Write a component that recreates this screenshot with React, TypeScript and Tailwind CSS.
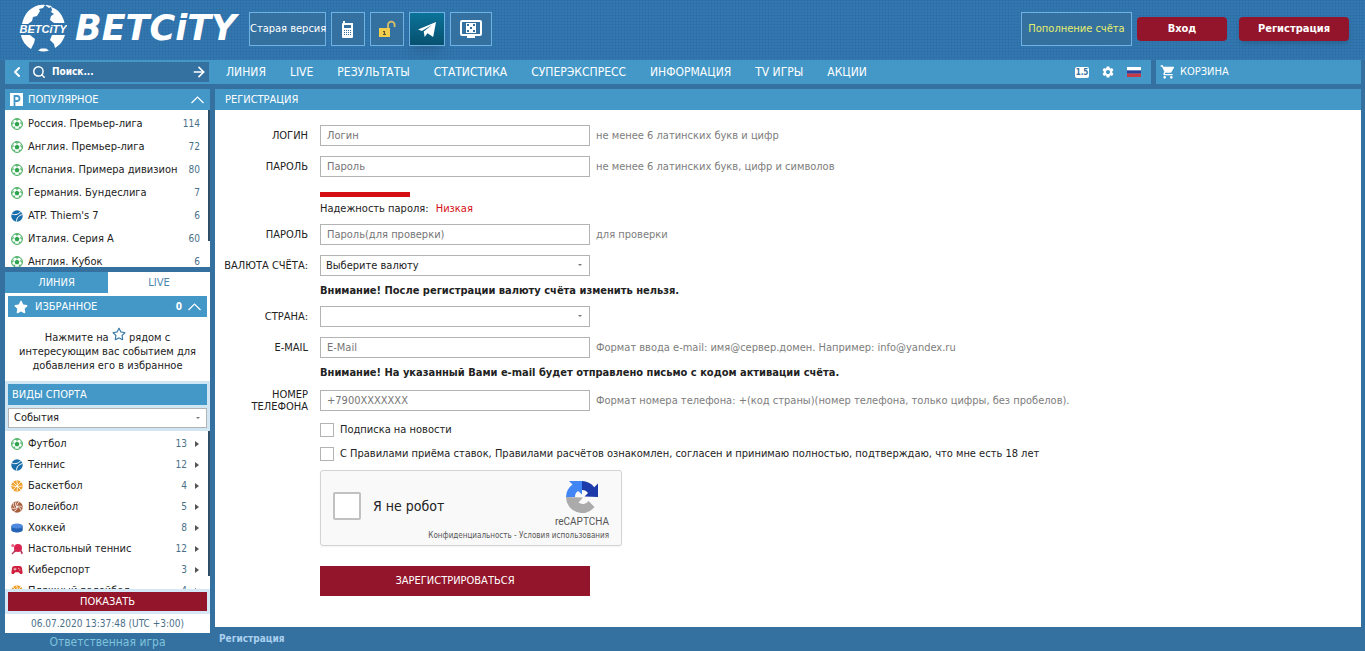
import React from 'react';
import { FaStar, FaRegStar } from 'react-icons/fa';
import { FiArrowRight, FiChevronLeft, FiSearch } from 'react-icons/fi';
import { MdSettings, MdShoppingCart, MdSportsEsports } from 'react-icons/md';

const SoccerIcon = () => (
  <svg viewBox="0 0 24 24" className="size-3 shrink-0">
    <circle cx="12" cy="12" r="10.8" fill="#fff" stroke="#35a853" strokeWidth="2" />
    <path d="M12 7l5 3.600-2 5.800H9l-2-5.800z" fill="#2ea44f" />
    <path d="M7 2.500L12 5.500l5-3zM1.500 14l4-3.500-1-4zM22.500 14l-4-3.500 1-4zM5 20l4-.5-3.500-3.500zM19 20l-4-.5 3.500-3.500z" fill="#35a853" />
  </svg>
);

const TennisIcon = () => (
  <svg viewBox="0 0 24 24" className="size-3 shrink-0">
    <circle cx="12" cy="12" r="11.5" fill="#1a6fab" />
    <path d="M0 7c6 4 14 3 20-4M11 23c0-7 4-12 12-14" fill="none" stroke="#fff" strokeWidth="2" />
  </svg>
);

const BasketballIcon = () => (
  <svg viewBox="0 0 24 24" className="size-3 shrink-0">
    <circle cx="12" cy="12" r="11.5" fill="#f0a22e" />
    <path d="M4 4l16 16M20 4L4 20M11 1c3 5 2 17 1 22M1 11c5 3 17 2 22 1" fill="none" stroke="#fff" strokeWidth="1.5" />
  </svg>
);

const VolleyballIcon = () => (
  <svg viewBox="0 0 24 24" className="size-3 shrink-0">
    <circle cx="12" cy="12" r="11.5" fill="#a9603f" />
    <path
      d="M12 12c-1-5 1-8 5-10M12 12c4-3 8-2 11 1M12 12c0 5-3 8-7 9M12 12C8 9 8 4 11 1M12 12c5 0 8 3 8 7M12 12c-3 4-7 4-10 2M8 13c-3-2-4-5-3-9"
      fill="none"
      stroke="#fff"
      strokeWidth="1.6"
    />
  </svg>
);

const PuckIcon = () => (
  <svg viewBox="0 0 24 24" className="size-3 shrink-0">
    <path d="M.5 8v8c0 6.500 23 6.500 23 0V8z" fill="#2463b5" />
    <ellipse cx="12" cy="8" rx="11.500" ry="5" fill="#4f8ade" />
  </svg>
);

const TableTennisIcon = () => (
  <svg viewBox="0 0 24 24" className="size-3 shrink-0">
    <circle cx="14" cy="10" r="8" fill="#dc2450" />
    <path d="M18 15l2-2 4 7-3 3z" fill="#b83a5a" />
    <path d="M7 13l4 4-4 2-4 4-2-2 4-4z" fill="#b83a5a" />
    <circle cx="3.500" cy="5" r="3" fill="#e8627f" />
  </svg>
);

const EsportsIcon = () => <MdSportsEsports className="-mx-px size-[14px] shrink-0 text-[#d01f3c]" />;

const GlobeLogo = () => (
  <svg viewBox="0 0 48 48" className="size-12 shrink-0">
    <g fill="#fff">
      <path d="M15 3c4-2 7-2.500 11-2l-2 3-4 1 1 2-3 5-4 1-1 4-4 3H3C5 11 9 6 15 3z" />
      <path d="M32 3c7 2 12 8 13.500 16H35l-4-3 1-4 3-2-3-2 1-2z" />
      <path d="M2 31h9l5 4-1 4-3 6C7 42 3 37 2 31z" />
      <path d="M33 31h13c-2 6-5 10-10 13l-1-4-4-4z" />
      <path d="M19 46.500l3-2h5l3 2c-4 1.300-7 1.300-11 0z" />
      <path d="M26 1c3 0 5 .5 7 1.500L30 4z" />
    </g>
    <text x="24" y="29" textAnchor="middle" fill="#fff" fontSize="11" fontWeight="bold" fontStyle="italic" fontFamily="Liberation Sans, sans-serif">
      BETCiTY
    </text>
  </svg>
);

const PhoneIcon = () => (
  <svg viewBox="0 0 12 17" className="h-[17px] w-3">
    <path d="M1 0h2v2h8v14a1 1 0 0 1-1 1H1a1 1 0 0 1-1-1V3a1 1 0 0 1 1-1z" fill="#fff" />
    <path d="M2 4h7v3H2z" fill="#3571a0" />
    <path d="M2 9.500h8M2 11.500h8M2 13.500h8" stroke="#3571a0" strokeDasharray="1 1" />
  </svg>
);

const LockIcon = () => (
  <svg viewBox="0 0 18 18" className="size-[18px]">
    <path d="M10 9V5a3.300 3.300 0 0 1 6.600 0v2" fill="none" stroke="#d9c069" strokeWidth="1.800" />
    <rect x="1" y="8" width="11" height="9" fill="#f3cd4c" />
    <path d="M5 11h2v3h1v1H5v-1h.8v-2H5z" fill="#5a5230" />
  </svg>
);

const TelegramIcon = () => (
  <svg viewBox="0 0 20 18" className="h-[17px] w-[19px]">
    <path d="M0 9L19 1 16 17l-6-4-3 4-1-6L15 4 4 10.500z" fill="#fff" />
  </svg>
);

const ScreenIcon = () => (
  <svg viewBox="0 0 22 18" className="h-[18px] w-[22px]">
    <rect x="1" y="1" width="20" height="14" rx="1" fill="none" stroke="#fff" strokeWidth="2" />
    <path d="M7 15h8v3H7z" fill="#fff" />
    <rect x="6" y="3" width="10" height="10" fill="#fff" />
    <path d="M7 4h2v2H7zM13 4h2v2h-2zM7 10h2v2H7zM13 10h2v2h-2zM10 7h2v2h-2z" fill="#3571a0" />
  </svg>
);

const FlagIcon = () => (
  <svg viewBox="0 0 14 10" className="h-[10px] w-[14px]">
    <path d="M0 0h14v3.500H0z" fill="#fff" />
    <path d="M0 3.500h14v3H0z" fill="#2a3f9a" />
    <path d="M0 6.500h14V10H0z" fill="#c43a46" />
  </svg>
);

const PopularIcon = () => (
  <svg viewBox="0 0 13 13" className="size-[13px]">
    <path d="M0 0h13v13H0z" fill="#fff" />
    <path d="M4.500 13V3h2.500a2.500 2.500 0 0 1 0 5H4.500" fill="none" stroke="#4398c8" strokeWidth="1.800" />
  </svg>
);

const CollapseIcon = () => (
  <svg viewBox="0 0 13 8" className="h-2 w-[13px]">
    <path d="M.5 7l6-6 6 6" fill="none" stroke="#fff" strokeWidth="1.200" />
  </svg>
);

const RecaptchaIcon = () => (
  <svg viewBox="0 0 64 64" className="size-8 shrink-0">
    <path d="M64 32V5l-7.500 7.500A32 32 0 0 0 32 0v18a14 14 0 0 1 12 6l-7 7z" fill="#1c3aa9" />
    <path d="M32 0H6l7 7A32 32 0 0 0 0 32h18a14 14 0 0 1 6-12l8 7z" fill="#4285f4" />
    <path d="M0 32a32 32 0 0 0 57 20L45 40a14 14 0 0 1-20 3l9-10z" fill="#ababab" />
  </svg>
);

const menu = ['ЛИНИЯ', 'LIVE', 'РЕЗУЛЬТАТЫ', 'СТАТИСТИКА', 'СУПЕРЭКСПРЕСС', 'ИНФОРМАЦИЯ', 'TV ИГРЫ', 'АКЦИИ'];

const popular = [
  { name: 'Россия. Премьер-лига', count: 114, Icon: SoccerIcon },
  { name: 'Англия. Премьер-лига', count: 72, Icon: SoccerIcon },
  { name: 'Испания. Примера дивизион', count: 80, Icon: SoccerIcon },
  { name: 'Германия. Бундеслига', count: 7, Icon: SoccerIcon },
  { name: "ATP. Thiem's 7", count: 6, Icon: TennisIcon },
  { name: 'Италия. Серия А', count: 60, Icon: SoccerIcon },
  { name: 'Англия. Кубок', count: 6, Icon: SoccerIcon },
];

const sports = [
  { name: 'Футбол', count: 13, Icon: SoccerIcon },
  { name: 'Теннис', count: 12, Icon: TennisIcon },
  { name: 'Баскетбол', count: 4, Icon: BasketballIcon },
  { name: 'Волейбол', count: 5, Icon: VolleyballIcon },
  { name: 'Хоккей', count: 8, Icon: PuckIcon },
  { name: 'Настольный теннис', count: 12, Icon: TableTennisIcon },
  { name: 'Киберспорт', count: 3, Icon: EsportsIcon },
  { name: 'Пляжный волейбол', count: 4, Icon: BasketballIcon },
];

const Header = () => (
  <header className="flex h-[60px] items-start bg-[#3277af] bg-[linear-gradient(90deg,rgba(20,60,120,0.08)_1px,transparent_1px),linear-gradient(rgba(20,60,120,0.08)_1px,transparent_1px)] bg-[size:3px_3px] pr-4 pl-[19px]">
    <a href="#" className="flex w-[230px] items-center gap-2 pt-1 text-white">
      <GlobeLogo />
      <span className="font-['DejaVu_Sans'] text-[35px] leading-[48px] font-bold italic">BETCiTY</span>
    </a>
    <div className="flex gap-[5px] pt-3">
      <button className="h-[34px] w-[77px] border border-[#6fb1e0] bg-[#3571a0] whitespace-nowrap text-white">Старая версия</button>
      <button aria-label="Мобильная версия" className="flex h-[34px] w-[34px] items-center justify-center border border-[#6fb1e0] bg-[#3571a0]">
        <PhoneIcon />
      </button>
      <button aria-label="Доступ" className="flex h-[34px] w-[34px] items-center justify-center border border-[#6fb1e0] bg-[#3571a0]">
        <LockIcon />
      </button>
      <button aria-label="Telegram" className="flex h-[34px] w-9 items-center justify-center border border-[#6fb1e0] bg-linear-to-b from-[#0b7399] to-[#07506f] shadow-lg">
        <TelegramIcon />
      </button>
      <button aria-label="ТВ" className="flex h-[34px] w-[42px] items-center justify-center border border-[#6fb1e0] bg-[#3571a0]">
        <ScreenIcon />
      </button>
    </div>
    <div className="ml-auto flex items-center pt-3">
      <a href="#" className="mr-[5px] flex h-[34px] w-[111px] items-center justify-center border border-[#6fb1e0] bg-[#3571a0] text-[#e6ef6c]">
        Пополнение счёта
      </a>
      <button className="mr-3 h-6 w-[90px] rounded bg-[#93152b] font-bold text-white">Вход</button>
      <button className="h-6 w-[110px] rounded bg-[#93152b] font-bold text-white shadow-md">Регистрация</button>
    </div>
  </header>
);

const TopBar = () => (
  <div className="mr-1 ml-[5px] flex h-6 gap-[5px] text-white">
    <div className="flex flex-1 items-center bg-[#4398c8]">
      <button aria-label="Свернуть" className="flex w-6 justify-center">
        <FiChevronLeft className="size-4" strokeWidth={3} />
      </button>
      <label className="flex h-5 w-[180px] items-center bg-[#3571a0] pr-[2px] pl-[3px]">
        <FiSearch className="size-[14px] shrink-0" strokeWidth={2.5} />
        <input aria-label="Поиск" placeholder="Поиск..." className="w-0 flex-1 bg-transparent pl-[6px] text-[10px] font-bold placeholder:text-white focus:outline-none" />
        <FiArrowRight className="size-4 shrink-0" strokeWidth={2.5} />
      </label>
      <nav className="ml-[17px] flex gap-6 text-[12px]">
        {menu.map((item) => (
          <a key={item} href="#">
            {item}
          </a>
        ))}
      </nav>
      <div className="ml-auto flex items-center gap-3 pr-[10px]">
        <button className="h-[11px] w-[14px] rounded-xs bg-white text-[8px] leading-[11px] font-bold text-[#3571a0]">1.5</button>
        <button aria-label="Настройки">
          <MdSettings className="size-[14px]" />
        </button>
        <button aria-label="Язык">
          <FlagIcon />
        </button>
      </div>
    </div>
    <a href="#" className="flex w-[205px] items-center gap-1 bg-[#4398c8] pl-1">
      <MdShoppingCart className="size-4" />
      КОРЗИНА
    </a>
  </div>
);

const Sidebar = () => (
  <aside className="flex w-[205px] shrink-0 flex-col">
    <h2 className="flex h-[21px] shrink-0 items-center bg-[#4398c8] pr-[6px] pl-[5px] text-white">
      <PopularIcon />
      <span className="mr-auto ml-[5px]">ПОПУЛЯРНОЕ</span>
      <CollapseIcon />
    </h2>
    <div className="relative h-[157px] shrink-0 overflow-hidden bg-white pt-[2px]">
      <ul>
        {popular.map(({ name, count, Icon }) => (
          <li key={name} className="flex h-[23px] items-center pr-[10px] pl-[6px]">
            <Icon />
            <a href="#" className="ml-[5px]">{name}</a>
            <span className="ml-auto text-[10px] text-[#4a7089]">{count}</span>
          </li>
        ))}
      </ul>
      <div className="absolute top-0 right-0 h-[131px] w-[2px] bg-[#2f4f68]" />
    </div>
    <div className="mt-[5px] flex h-[21px] shrink-0">
      <button className="w-[103px] bg-[#4398c8] text-white">ЛИНИЯ</button>
      <button className="flex-1 bg-white text-[#4a87b0]">LIVE</button>
    </div>
    <div className="h-[88px] shrink-0 bg-white px-[3px] pt-[3px]">
      <h2 className="flex h-[21px] items-center bg-[#4398c8] pr-[6px] pl-[6px] text-white">
        <FaStar className="size-[14px]" />
        <span className="ml-[7px]">ИЗБРАННОЕ</span>
        <span className="mr-[6px] ml-auto text-[10px] font-bold">0</span>
        <CollapseIcon />
      </h2>
      <p className="pt-[10px] text-center leading-[14px]">
        Нажмите на <FaRegStar className="inline size-[14px] align-[0px] text-[#3b7ba8]" /> рядом с<br />
        интересующим вас событием для
        <br />
        добавления его в избранное
      </p>
    </div>
    <div className="shrink-0 bg-[#d0e6f2] p-[3px]">
      <h2 className="flex h-[21px] items-center bg-[#4398c8] pl-1 text-white">ВИДЫ СПОРТА</h2>
      <div className="relative mt-[3px]">
        <select aria-label="Вид" className="block h-5 w-full appearance-none border border-[#b3b3b3] bg-white pl-[5px]">
          <option>События</option>
        </select>
        <div className="pointer-events-none absolute top-[9px] right-[7px] border-x-2 border-t-2 border-x-transparent border-t-[#777]" />
      </div>
    </div>
    <div className="relative min-h-0 flex-1 basis-0 overflow-hidden bg-white pt-[2px]">
      <ul>
        {sports.map(({ name, count, Icon }) => (
          <li key={name} className="flex h-[21px] items-center pr-[11px] pl-[6px]">
            <Icon />
            <a href="#" className="ml-[5px]">{name}</a>
            <span className="ml-auto text-[10px] text-[#4a7089]">{count}</span>
            <span className="ml-2 border-y-[3px] border-l-4 border-y-transparent border-l-[#555]" />
          </li>
        ))}
      </ul>
      <div className="absolute top-0 right-0 h-[145px] w-[2px] bg-[#2f4f68]" />
    </div>
    <div className="shrink-0 bg-[#d6e8f6] p-[3px]">
      <button className="block h-[19px] w-full bg-[#93152b] text-white">ПОКАЗАТЬ</button>
    </div>
    <div className="h-[19px] shrink-0 bg-white text-center text-[10px] leading-[19px] text-[#4a7089]">06.07.2020 13:37:48 (UTC +3:00)</div>
    <a href="#" className="h-[18px] shrink-0 text-center text-[12px] leading-[19px] text-[#7fc3dc]">Ответственная игра</a>
  </aside>
);

type FieldProps = {
  id: string;
  label: string;
  placeholder?: string;
  hint?: string;
  type?: string;
  options?: string[];
};

const Field = ({ id, label, placeholder, hint, type = 'text', options }: FieldProps) => (
  <div className="flex min-h-[31px] items-center">
    <label htmlFor={id} className="mr-3 w-[93px] shrink-0 text-right leading-3">
      {label}
    </label>
    {options ? (
      <div className="relative w-[270px]">
        <select id={id} className="block h-[21px] w-full appearance-none border border-[#b3b3b3] bg-white pl-[5px]">
          {options.map((option) => (
            <option key={option}>{option}</option>
          ))}
        </select>
        <div className="pointer-events-none absolute top-[9px] right-[8px] border-x-2 border-t-2 border-x-transparent border-t-[#777]" />
      </div>
    ) : (
      <input id={id} type={type} placeholder={placeholder} className="h-[21px] w-[270px] border border-[#b3b3b3] px-[6px] placeholder:text-[#757575]" />
    )}
    {hint && <span className="ml-[6px] text-[#7d7d7d]">{hint}</span>}
  </div>
);

const CheckRow = ({ id, label }: { id: string; label: string }) => (
  <div className="ml-[105px] flex h-6 items-center">
    <input id={id} type="checkbox" className="size-[14px] appearance-none border border-[#b3b3b3] bg-white checked:bg-[#4398c8]" />
    <label htmlFor={id} className="ml-[6px]">
      {label}
    </label>
  </div>
);

const RegistrationForm = () => (
  <form className="min-h-0 flex-1 bg-white pt-[10px] pb-[31px]">
    <Field id="login" label="ЛОГИН" placeholder="Логин" hint="не менее 6 латинских букв и цифр" />
    <Field id="password" type="password" label="ПАРОЛЬ" placeholder="Пароль" hint="не менее 6 латинских букв, цифр и символов" />
    <div className="ml-[105px] h-[37px] pt-[10px]">
      <div className="h-[5px] w-[90px] bg-[#d51015]" />
      <p className="leading-6">
        Надежность пароля: <span className="ml-1 text-[#d51015]">Низкая</span>
      </p>
    </div>
    <Field id="password2" type="password" label="ПАРОЛЬ" placeholder="Пароль(для проверки)" hint="для проверки" />
    <Field id="currency" label="ВАЛЮТА СЧЁТА:" options={['Выберите валюту']} />
    <p className="ml-[105px] leading-5 font-bold">Внимание! После регистрации валюту счёта изменить нельзя.</p>
    <Field id="country" label="СТРАНА:" options={['']} />
    <Field id="email" type="email" label="E-MAIL" placeholder="E-Mail" hint="Формат ввода e-mail: имя@сервер.домен. Например: info@yandex.ru" />
    <p className="ml-[105px] leading-5 font-bold">Внимание! На указанный Вами e-mail будет отправлено письмо с кодом активации счёта.</p>
    <div className="py-[2px]">
      <Field
        id="phone"
        type="tel"
        label="НОМЕР ТЕЛЕФОНА"
        placeholder="+7900XXXXXXX"
        hint="Формат номера телефона: +(код страны)(номер телефона, только цифры, без пробелов)."
      />
    </div>
    <CheckRow id="news" label="Подписка на новости" />
    <CheckRow id="rules" label="С Правилами приёма ставок, Правилами расчётов ознакомлен, согласен и принимаю полностью, подтверждаю, что мне есть 18 лет" />
    <div className="mt-1 ml-[105px] flex h-[76px] w-[302px] flex-col rounded-[3px] border border-[#d3d3d3] bg-[#f9f9f9] px-3 shadow-xs">
      <div className="flex h-[60px]">
        <div className="flex items-center pt-[10px]">
          <input id="robot" type="checkbox" className="size-7 appearance-none rounded-xs border-2 border-[#c1c1c1] bg-white" />
          <label htmlFor="robot" className="ml-3 text-[14px]">
            Я не робот
          </label>
        </div>
        <div className="ml-auto flex flex-col items-center pt-[10px] font-[Roboto] text-[10px] leading-[18px] text-[#555]">
          <RecaptchaIcon />
          reCAPTCHA
        </div>
      </div>
      <div className="text-right text-[8px] leading-[10px] text-[#555]">
        <a href="#">Конфиденциальность</a> - <a href="#">Условия использования</a>
      </div>
    </div>
    <button type="button" className="mt-5 ml-[105px] block h-[30px] w-[270px] bg-[#93152b] text-white">
      ЗАРЕГИСТРИРОВАТЬСЯ
    </button>
  </form>
);

const App = () => (
  <div className="flex h-screen min-h-[651px] flex-col bg-[#3571a0] font-['DejaVu_Sans_Condensed','Noto_Sans',sans-serif] text-[11px] leading-4 text-[#222]">
    <Header />
    <TopBar />
    <div className="mt-[5px] mr-1 ml-[5px] flex min-h-0 flex-1 gap-[5px]">
      <Sidebar />
      <main className="flex min-w-0 flex-1 flex-col">
        <h1 className="flex h-[21px] shrink-0 items-center bg-[#4398c8] pl-[10px] text-white">РЕГИСТРАЦИЯ</h1>
        <RegistrationForm />
        <footer className="h-6 shrink-0 pl-1 text-[10px] leading-6 font-bold text-[#a9d0ee]">Регистрация</footer>
      </main>
    </div>
  </div>
);

export default App;
